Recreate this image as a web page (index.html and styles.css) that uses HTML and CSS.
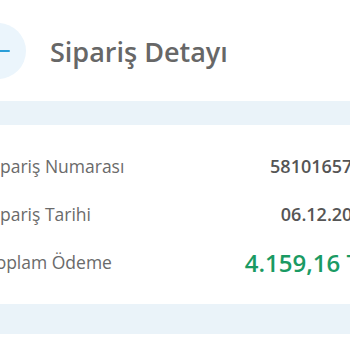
FILE: index.html
```html
<!DOCTYPE html>
<html lang="tr">
<head>
    <meta charset="utf-8">
    <title>Sipariş Detayı</title>
    <link rel="stylesheet" href="styles.css">
</head>
<body>
    <div class="page">
        <header class="topbar">
            <button class="back" type="button" aria-label="Geri">
                <svg width="12" height="4" viewBox="0 0 12 4"><rect x="0" y="1" width="12" height="2" rx="1" fill="#2a9ed8"/></svg>
            </button>
            <h1 class="title">Sipariş Detayı</h1>
        </header>
        <div class="band"></div>
        <section class="summary">
            <div class="row">
                <span class="label">Sipariş Numarası</span>
                <span class="value">5810165789</span>
            </div>
            <div class="row">
                <span class="label">Sipariş Tarihi</span>
                <span class="value">06.12.2023</span>
            </div>
            <div class="row">
                <span class="label">Toplam Ödeme</span>
                <span class="value total">4.159,16 TL</span>
            </div>
        </section>
        <div class="band band-low"></div>
    </div>
</body>
</html>
```

FILE: styles.css
```css
html, body{
    margin: 0;
    padding: 0;
    background-color: #fff;
    overflow: hidden;
}
.page{
    width: 387px;
    margin-left: -14px;
    font-family: "Open Sans", "Noto Sans", sans-serif;
    color: #666;
}
.topbar{
    display: flex;
    align-items: center;
    height: 56px;
    padding-top: 23px;
    padding-bottom: 22px;
}
.back{
    flex: none;
    width: 56px;
    height: 56px;
    margin-left: -16px;
    border: 0;
    border-radius: 50%;
    background-color: #ebf5fc;
    display: flex;
    align-items: center;
    justify-content: flex-end;
    padding: 0 16px 0 0;
}
.title{
    margin: 0 0 0 24px;
    font-size: 27px;
    font-weight: 600;
    color: #676767;
}
.band{
    height: 24px;
    background-color: #eaf3f9;
}
.band-low{
    height: 30px;
}
.summary{
    padding: 17px 0 18px;
}
.row{
    display: flex;
    justify-content: space-between;
    align-items: center;
    height: 48px;
}
.label{
    font-size: 17.5px;
    color: #6a6a6a;
}
.value{
    font-size: 18px;
    font-weight: 600;
    color: #555;
}
.total{
    font-size: 24px;
    color: #1a9a63;
}
```
